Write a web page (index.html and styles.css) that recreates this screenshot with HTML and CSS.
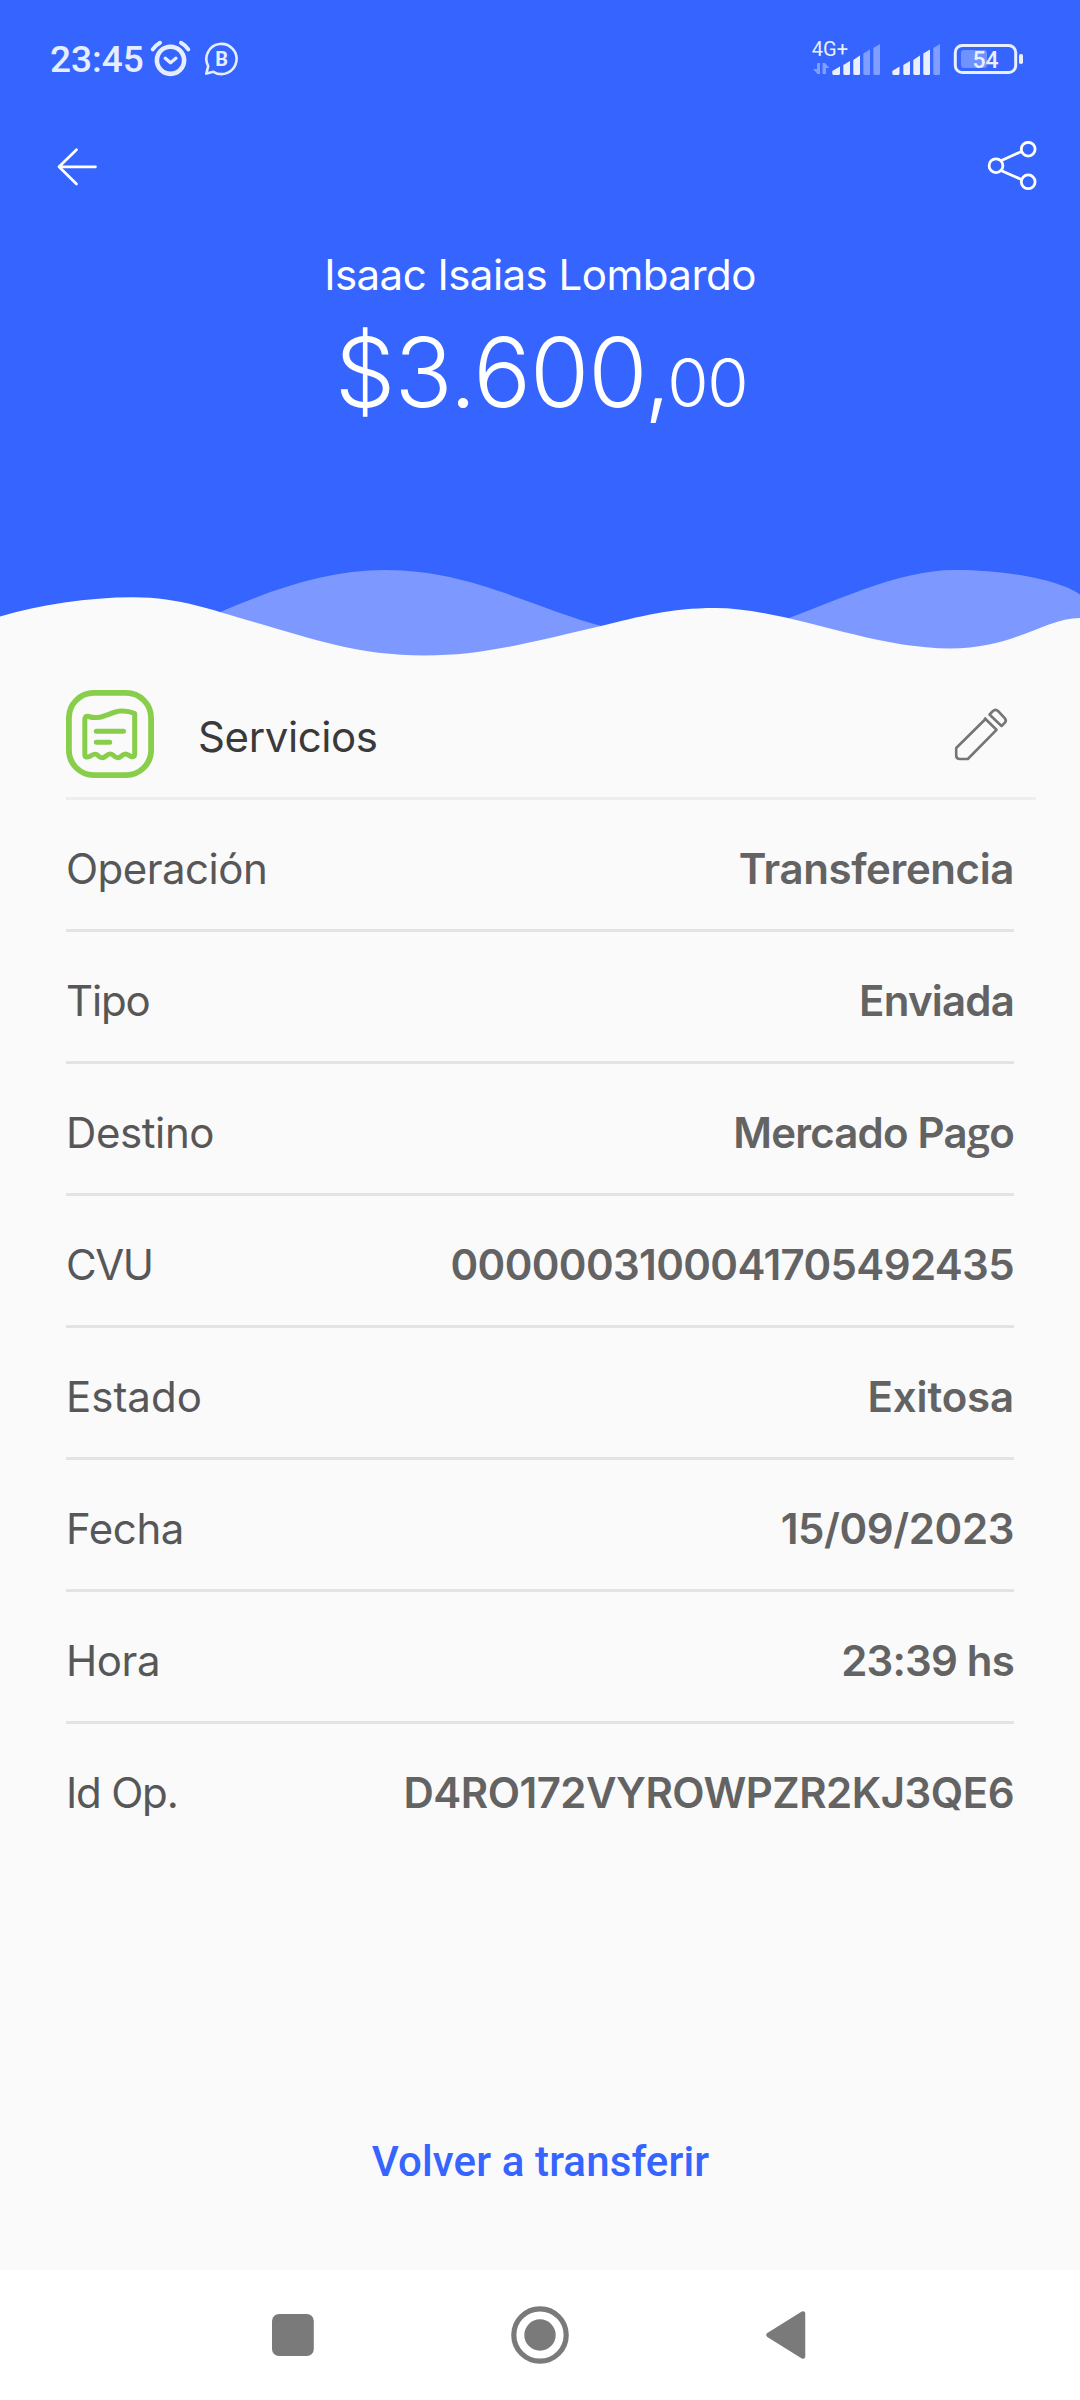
FILE: index.html
```html
<!DOCTYPE html>
<html lang="es">
<head>
<meta charset="utf-8">
<title>Transferencia</title>
<link rel="stylesheet" href="styles.css">
</head>
<body>
<div class="screen">
  <header class="hero">
    <div class="status">
      <div class="status-left">
        <span class="clock">23:45</span>
        <svg class="alarm" width="44" height="40" viewBox="149 39 44 40" fill="none" stroke="#e6edff" stroke-linecap="round" stroke-linejoin="round">
          <circle cx="170.5" cy="60.3" r="13.6" stroke-width="4.6"/>
          <path d="M152.7 49.3Q155.5 45.4 160 42.8M181 42.8Q185.5 45.4 188.3 49.3" stroke-width="4"/>
          <path d="M165.3 58.3L170.5 62.7L175.9 58.3" stroke-width="3.4"/>
        </svg>
        <svg class="bubble" width="36" height="36" viewBox="205 41 36 36">
          <path d="M207.3 73.6L209.2 66.2A15.1 15.1 0 1 1 214.5 71.8Z" fill="none" stroke="#e6edff" stroke-width="2.6" stroke-linejoin="round"/>
          <text class="bubble-letter" x="222.6" y="65.8" text-anchor="middle">B</text>
        </svg>
      </div>
      <svg class="status-right" width="220" height="50" viewBox="806 34 220 50" fill="#e9efff">
        <text class="network" x="811.8" y="56">4G+</text>
        <g fill="#7f9eff">
          <path d="M817 63h3v11h-2.5l-4.5-5h4zM822.5 63h2.5l4.5 5h-3.500v6h-3.500z"/>
          <path d="M863.300 53.500L870 49.500V73.500Q870 75 868.500 75H865Q863.300 75 863.300 73.500ZM873.300 48L880 44V73.500Q880 75 878.500 75H875Q873.300 75 873.300 73.500ZM933.300 48L940 44V73.500Q940 75 938.500 75H935Q933.300 75 933.300 73.500Z"/>
          <rect x="961" y="50" width="26" height="18" rx="3" fill="#7092ff"/>
        </g>
        <path d="M832.300 71L840 66.500V73.500Q840 75 838.500 75H834Q832.300 75 832.300 73.500ZM843.300 65L850 61V73.500Q850 75 848.500 75H845Q843.300 75 843.300 73.500ZM853.300 60L860 55.500V73.500Q860 75 858.500 75H855Q853.300 75 853.300 73.500Z"/>
        <path d="M892.300 71L899.500 66.500V73.500Q899.500 75 898 75H894Q892.300 75 892.300 73.500ZM903.300 65L910 61V73.500Q910 75 908.500 75H905Q903.300 75 903.300 73.500ZM913.300 60L920 55.500V73.500Q920 75 918.500 75H915Q913.300 75 913.300 73.500ZM923.300 53.500L930 49.500V73.500Q930 75 928.500 75H925Q923.300 75 923.300 73.500Z"/>
        <rect x="955.300" y="45.400" width="60.400" height="27.200" rx="7" fill="none" stroke="#e9efff" stroke-width="3"/>
        <rect x="1019" y="54" width="4" height="10" rx="1.800"/>
        <text class="charge" x="972.500" y="68">54</text>
      </svg>
    </div>
    <div class="appbar">
      <svg width="44" height="40" viewBox="55 147 44 40" fill="none" stroke="#fff" stroke-width="2.700" stroke-linecap="round" stroke-linejoin="round">
        <path d="M95.500 166.800H59M76.500 149.800L59 166.800L76.500 184"/>
      </svg>
      <svg width="52" height="52" viewBox="986 141 52 52" fill="none" stroke="#fff" stroke-width="2.800">
        <circle cx="996" cy="165.700" r="6.900"/><circle cx="1028.200" cy="149.200" r="6.900"/><circle cx="1028.200" cy="181.800" r="6.900"/>
        <path d="M1001.500 160.500L1021.500 151.500M1001.500 170.800L1021.500 179.500"/>
      </svg>
    </div>
    <h1 class="name">Isaac Isaias Lombardo</h1>
    <p class="amount">$3.600,<span class="cents">00</span></p>
    <svg class="waves" width="1080" height="110" viewBox="0 560 1080 110">
      <path fill="#7d99ff" d="M175 632C250 598 315 570 385 570C470 570 530 607 605 627V662H175ZM740 635C824 609 890 570 955 570C1010 570 1062 581 1080 594.500V662H740Z"/>
      <path fill="#fafafb" d="M0 616.500C40 605 88 597.300 133 597.300C180 597.300 215 611 245 619.500C310 638 355 655.500 425 655.500C480 655.500 520 645 601 626C640 616.500 670 608 715 608C785 608 870 648.500 950 648.500C1015 648.500 1045 618 1080 618V670H0Z"/>
    </svg>
  </header>
  <main class="details">
    <section class="category">
      <svg width="88" height="88" viewBox="0 0 88 88" fill="none" stroke="#88ce4a" stroke-linecap="round" stroke-linejoin="round">
        <rect x="2.900" y="2.900" width="82.200" height="82.200" rx="25" stroke-width="5.800"/>
        <path d="M18.800 29.500Q18.800 25.500 22.500 26.500C40 32 48 14.500 68.700 23.500V64Q68.700 67.500 65 66.500C61 64.500 59.500 62.500 55.500 66C52.500 68.500 50.500 68.500 47.500 65.500C44.500 63 42.500 63.500 40 66C37 68.500 34.500 68.500 32 65.500C29 62.500 26.500 65 23.500 66.500Q18.800 68.200 18.800 64.500Z" stroke-width="5"/>
        <path d="M30.300 41.200H57.500M30.300 52.200H43.700" stroke-width="5"/>
      </svg>
      <h2 class="category-name">Servicios</h2>
      <svg width="56" height="56" viewBox="953 706 56 56" fill="none" stroke="#757575" stroke-width="2.600" stroke-linejoin="round">
        <path d="M985.500 719L996.500 729.800L967.800 759H960Q956.200 759 956.200 755.500V748L985.500 719L984.500 717.500"/>
        <path d="M989.500 714.500L993 711Q995.500 708.700 998 711L1004.500 717.800Q1007 720.500 1004.700 722.800L1001.500 726Z"/>
      </svg>
    </section>
    <dl class="rows">
      <div class="row"><dt class="t50">Operación</dt><dd class="t40">Transferencia</dd></div>
      <div class="row"><dt class="t120">Tipo</dt><dd class="t80">Enviada</dd></div>
      <div class="row"><dt class="t40">Destino</dt><dd class="t80">Mercado Pa<span class="looped">g</span>o</dd></div>
      <div class="row"><dt class="t150">CVU</dt><dd class="t60">0000003100041705492435</dd></div>
      <div class="row"><dt>Estado</dt><dd class="t10">Exitosa</dd></div>
      <div class="row"><dt class="t40">Fecha</dt><dd class="t40">15/09/2023</dd></div>
      <div class="row"><dt class="t40">Hora</dt><dd class="t80">23:39 hs</dd></div>
      <div class="row"><dt class="t120">Id Op.</dt><dd class="t50">D4RO172VYROWPZR2KJ3QE6</dd></div>
    </dl>
  </main>
  <div class="actions"><a class="again">Volver a transferir</a></div>
  <nav class="navbar">
    <svg width="540" height="60" viewBox="270 2305 540 60" fill="#7a7a7a">
      <rect x="272" y="2314" width="41.800" height="42" rx="7"/>
      <circle cx="540" cy="2335" r="26.200" fill="none" stroke="#7a7a7a" stroke-width="5.200"/>
      <circle cx="540" cy="2335" r="15.700"/>
      <path d="M768.500 2335L803 2313.500V2356.500Z" stroke="#7a7a7a" stroke-width="4.500" stroke-linejoin="round"/>
    </svg>
  </nav>
</div>
</body>
</html>
```
FILE: styles.css
```css
* { box-sizing: border-box; margin: 0; padding: 0; }

body {
  background: #fafafb;
  font-family: Inter, "Liberation Sans", sans-serif;
  font-size: 42px;
}

.screen {
  width: 1080px;
  height: 2400px;
  display: flex;
  flex-direction: column;
}

svg { display: block; flex: none; }

.hero {
  height: 670px;
  background: #3565fe;
  color: #fff;
  display: flex;
  flex-direction: column;
}

.status {
  height: 118px;
  padding: 0 54px 0 50px;
  display: flex;
  justify-content: space-between;
}

.status-left { display: flex; }

.clock {
  width: 99px;
  padding-top: 37px;
  font: 500 37px/46px Roboto, sans-serif;
  color: #e6edff;
}

.alarm { margin-top: 39px; }
.bubble { margin: 41px 0 0 11px; }
.bubble-letter { font: 700 20px Roboto, sans-serif; fill: #e6edff; }
.status-right { margin-top: 34px; }
.network { font: 400 20px Roboto, sans-serif; }
.charge { font: 500 23px Roboto, sans-serif; }

.appbar {
  height: 97px;
  padding: 0 42px 0 55px;
  display: flex;
  align-items: center;
  justify-content: space-between;
}

.name {
  margin-top: 30px;
  font-size: 42px;
  font-weight: 400;
  line-height: 60px;
  letter-spacing: -0.52px;
  text-align: center;
}

.amount {
  margin-top: 12px;
  padding-left: 2px;
  font-size: 96px;
  font-weight: 300;
  line-height: 110px;
  letter-spacing: -1px;
  text-align: center;
}

.cents {
  margin-left: -3px;
  font-size: 67px;
  line-height: 1;
  letter-spacing: -1.4px;
}

.waves { margin-top: auto; }

.details { padding: 0 66px; }

.category {
  height: 130px;
  margin-right: -22px;
  padding: 1px 27px 0 0;
  border-bottom: 3px solid #eeeeee;
  display: flex;
  align-items: center;
}

.category-name {
  flex: 1;
  padding: 5px 0 0 44px;
  font-size: 42px;
  font-weight: 400;
  line-height: 50px;
  letter-spacing: -0.4px;
  color: #3a3a3a;
}

.row {
  height: 132px;
  padding-top: 8px;
  border-bottom: 3px solid #e3e3e3;
  display: flex;
  align-items: center;
  justify-content: space-between;
  line-height: 50px;
  white-space: nowrap;
}

.row:last-child { border-bottom-color: transparent; }

dt { color: #575757; }
dd { color: #636363; font-weight: 600; }

.t10 { letter-spacing: -0.15px; }
.t40 { letter-spacing: -0.4px; }
.t50 { letter-spacing: -0.52px; }
.t60 { letter-spacing: -0.63px; }
.t80 { letter-spacing: -0.8px; }
.t120 { letter-spacing: -1.2px; }
.t150 { letter-spacing: -1.5px; }

.looped { font-family: "Open Sans", sans-serif; line-height: 1; }

.actions {
  flex: 1;
  padding: 0 0 83px 1px;
  display: flex;
  align-items: flex-end;
  justify-content: center;
}

.again {
  font: 500 42px/50px Roboto, sans-serif;
  letter-spacing: 0.13px;
  color: #3565fe;
}

.navbar {
  height: 130px;
  background: #fff;
  display: flex;
  align-items: center;
  justify-content: center;
}
```
